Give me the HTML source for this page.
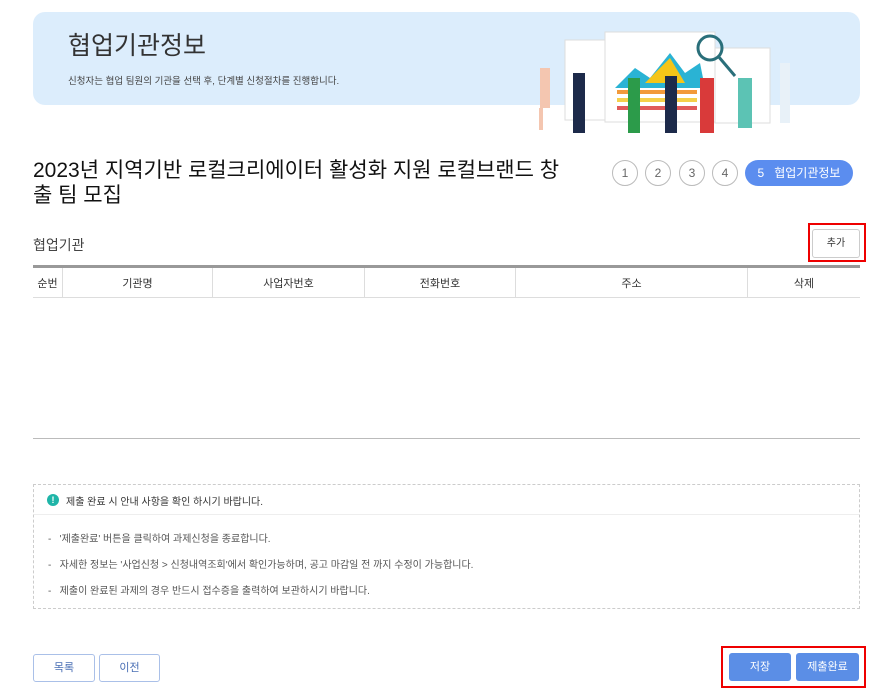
<!DOCTYPE html>
<html><head><meta charset="utf-8"><style>
body{margin:0;width:894px;height:693px;background:#fff;font-family:"Liberation Sans","Noto Sans CJK KR",sans-serif;color:#222;position:relative;overflow:hidden}
.a{position:absolute}
.banner{left:33px;top:12px;width:827px;height:93px;background:#dcedfc;border-radius:12px}
.circ{width:24px;height:24px;border:1px solid #bbb;border-radius:50%;text-align:center;line-height:24px;font-size:12px;color:#666;top:160px}
th{font-weight:normal;padding:0}
.btn{border:1px solid #aac0e8;border-radius:3px;text-align:center;font-size:11px;color:#4a6fb5;background:#fff}
.bb{background:#5b8ee6;color:#fff;border-radius:3px;text-align:center;font-size:11px;line-height:28px}
.li{left:48px;font-size:10px;color:#555}
</style></head><body>
<div class="a banner"></div>
<div class="a" style="left:68px;top:26px;font-size:25px;color:#333">협업기관정보</div>
<div class="a" style="left:68px;top:73px;font-size:9.5px;color:#444">신청자는 협업 팀원의 기관을 선택 후, 단계별 신청절차를 진행합니다.</div>
<svg class="a" style="left:525px;top:28px" width="280" height="110">
<rect x="40" y="12" width="40" height="80" fill="#fff" stroke="#ddd"/>
<rect x="80" y="4" width="110" height="90" fill="#fff" stroke="#ddd"/>
<rect x="190" y="20" width="55" height="75" fill="#fff" stroke="#ddd"/>
<polygon points="90,60 110,40 125,50 145,25 160,45 175,35 180,60" fill="#2ab3d4"/>
<polygon points="120,55 145,30 160,55" fill="#f5c518"/>
<rect x="92" y="62" width="80" height="4" fill="#f29a3a"/><rect x="92" y="70" width="80" height="4" fill="#f5d04a"/><rect x="92" y="78" width="80" height="4" fill="#e05a5a"/>
<circle cx="185" cy="20" r="12" fill="none" stroke="#2a6f7a" stroke-width="3"/>
<line x1="193" y1="28" x2="210" y2="48" stroke="#2a6f7a" stroke-width="3"/>
<rect x="15" y="40" width="10" height="40" fill="#f4c6b0"/><rect x="14" y="80" width="4" height="22" fill="#f4c6b0"/>
<rect x="48" y="45" width="12" height="60" fill="#1d2a4a"/>
<rect x="103" y="50" width="12" height="55" fill="#2c9b4a"/>
<rect x="140" y="48" width="12" height="57" fill="#1d2a4a"/>
<rect x="175" y="50" width="14" height="55" fill="#d93a3a"/>
<rect x="213" y="50" width="14" height="50" fill="#5cc3b4"/>
<rect x="255" y="35" width="10" height="60" fill="#e8f1f8"/>
</svg>
<div class="a" style="left:33px;top:158px;font-size:21px;line-height:25px;width:560px;color:#111">2023년 지역기반 로컬크리에이터 활성화 지원 로컬브랜드 창<br>출 팀 모집</div>
<div class="a circ" style="left:612px">1</div>
<div class="a circ" style="left:645px">2</div>
<div class="a circ" style="left:679px">3</div>
<div class="a circ" style="left:712px">4</div>
<div class="a" style="left:745px;top:160px;width:108px;height:26px;border-radius:13px;background:#5b8def;color:#fff;font-size:12px;line-height:26px;text-align:center">5&nbsp;&nbsp; 협업기관정보</div>
<div class="a" style="left:33px;top:235px;font-size:14px;color:#444">협업기관</div>
<div class="a" style="left:808px;top:223px;width:54px;height:35px;border:2px solid #e00"></div>
<div class="a btn" style="left:812px;top:229px;width:46px;height:27px;line-height:27px;border-color:#ccc;color:#333;font-size:10px">추가</div>
<table class="a" style="left:33px;top:265px;width:827px;table-layout:fixed;border-collapse:collapse;border-top:3px solid #999;font-size:11px;color:#333">
<tr style="height:31px;border-bottom:1px solid #ddd">
<th style="width:29px">순번</th><th style="width:149px;border-left:1px solid #ddd">기관명</th><th style="width:151px;border-left:1px solid #ddd">사업자번호</th><th style="width:150px;border-left:1px solid #ddd">전화번호</th><th style="width:231px;border-left:1px solid #ddd">주소</th><th style="border-left:1px solid #ddd">삭제</th></tr></table>
<div class="a" style="left:33px;top:438px;width:827px;height:1px;background:#bbb"></div>
<div class="a" style="left:33px;top:484px;width:825px;height:123px;border:1px dashed #ccc"></div>
<div class="a" style="left:34px;top:514px;width:825px;height:1px;background:#eee"></div>
<div class="a" style="left:47px;top:494px;width:12px;height:12px;border-radius:50%;background:#1fb5a8;color:#fff;font-size:9px;line-height:12px;text-align:center;font-weight:bold">!</div>
<div class="a" style="left:66px;top:493px;font-size:10px;color:#333">제출 완료 시 안내 사항을 확인 하시기 바랍니다.</div>
<div class="a li" style="top:530px">-&nbsp;&nbsp; '제출완료' 버튼을 클릭하여 과제신청을 종료합니다.</div>
<div class="a li" style="top:556px">-&nbsp;&nbsp; 자세한 정보는 '사업신청 &gt; 신청내역조회'에서 확인가능하며, 공고 마감일 전 까지 수정이 가능합니다.</div>
<div class="a li" style="top:582px">-&nbsp;&nbsp; 제출이 완료된 과제의 경우 반드시 접수증을 출력하여 보관하시기 바랍니다.</div>
<div class="a btn" style="left:33px;top:654px;width:60px;height:26px;line-height:26px">목록</div>
<div class="a btn" style="left:99px;top:654px;width:59px;height:26px;line-height:26px">이전</div>
<div class="a" style="left:721px;top:646px;width:141px;height:38px;border:2px solid #e00"></div>
<div class="a bb" style="left:729px;top:653px;width:62px;height:28px">저장</div>
<div class="a bb" style="left:796px;top:653px;width:63px;height:28px">제출완료</div>
</body></html>
